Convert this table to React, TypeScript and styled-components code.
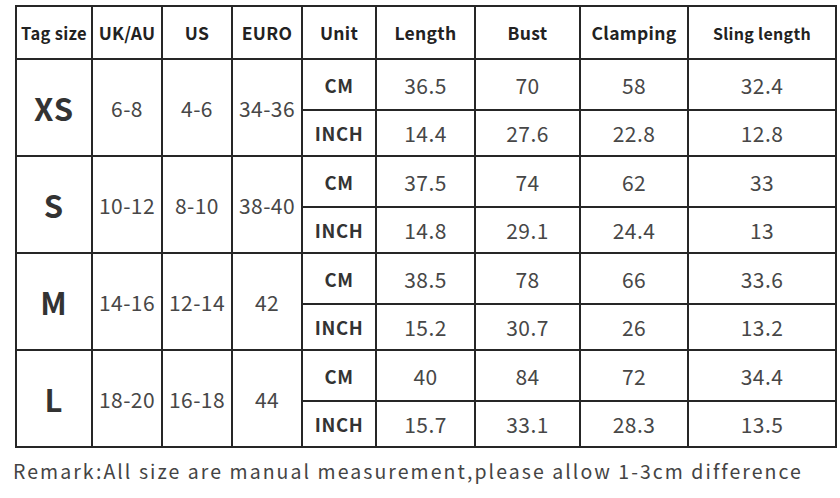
import { Fragment } from 'react';
import styled, { createGlobalStyle } from 'styled-components';

const GlobalStyle = createGlobalStyle`
  html, body {
    margin: 0;
    padding: 0;
    background: #ffffff;
  }
  body {
    font-family: "Noto Sans CJK SC", "Noto Sans", sans-serif;
  }
`;

type SizeRow = {
  tag: string;
  uk: string;
  us: string;
  euro: string;
  cm: string[];
  inch: string[];
};

const sizes: SizeRow[] = [
  { tag: 'XS', uk: '6-8', us: '4-6', euro: '34-36', cm: ['36.5', '70', '58', '32.4'], inch: ['14.4', '27.6', '22.8', '12.8'] },
  { tag: 'S', uk: '10-12', us: '8-10', euro: '38-40', cm: ['37.5', '74', '62', '33'], inch: ['14.8', '29.1', '24.4', '13'] },
  { tag: 'M', uk: '14-16', us: '12-14', euro: '42', cm: ['38.5', '78', '66', '33.6'], inch: ['15.2', '30.7', '26', '13.2'] },
  { tag: 'L', uk: '18-20', us: '16-18', euro: '44', cm: ['40', '84', '72', '34.4'], inch: ['15.7', '33.1', '28.3', '13.5'] },
];

// header label + font size (the reference shrinks the two longest labels)
const headers: [string, number][] = [
  ['Tag size', 16.5],
  ['UK/AU', 17.5],
  ['US', 17.5],
  ['EURO', 17.5],
  ['Unit', 17.5],
  ['Length', 17.5],
  ['Bust', 17.5],
  ['Clamping', 17.5],
  ['Sling length', 16],
];
const colWidths = [76, 70, 70, 70, 74, 99, 105, 108, 148];

const Page = styled.div`
  padding: 5px 0 0 15px;
`;

const Chart = styled.table`
  border-collapse: collapse;
  table-layout: fixed;
  width: 820px;
  border: 2px solid #262626;
`;

const Row = styled.tr<{ $h: number }>`
  height: ${(p) => p.$h}px;
`;

const HeadCell = styled.th<{ $size: number }>`
  padding: 0;
  border: 2px solid #262626;
  font-size: ${(p) => p.$size}px;
  font-weight: 700;
  color: #222;
  text-align: center;
  vertical-align: middle;
  white-space: nowrap;
  letter-spacing: 0.3px;
`;

const TagCell = styled.td`
  padding: 0;
  border: 2px solid #262626;
  font-size: 31px;
  font-weight: 700;
  color: #333;
  text-align: center;
  letter-spacing: 1px;
`;

const SpanCell = styled.td`
  padding: 0;
  border: 2px solid #262626;
  font-size: 21px;
  font-weight: 400;
  color: #474747;
  text-align: center;
  white-space: nowrap;
  letter-spacing: 0.4px;
`;

const UnitCell = styled.td`
  padding: 0;
  border: 2px solid #262626;
  font-size: 18.5px;
  font-weight: 700;
  color: #333;
  text-align: center;
  letter-spacing: 0.6px;
`;

const ValueCell = styled.td`
  padding: 0;
  border: 2px solid #262626;
  font-size: 21px;
  font-weight: 400;
  color: #474747;
  text-align: center;
  letter-spacing: 0.4px;
`;

const Remark = styled.p`
  margin: 8px 0 0 -2px;
  font-size: 19.5px;
  letter-spacing: 2.05px;
  color: #444;
  white-space: nowrap;
`;

export default function App() {
  return (
    <>
      <GlobalStyle />
      <Page>
        <Chart>
          <colgroup>
            {colWidths.map((w, i) => (
              <col key={i} style={{ width: w }} />
            ))}
          </colgroup>
          <thead>
            <Row $h={53}>
              {headers.map(([h, size]) => (
                <HeadCell key={h} $size={size}>
                  {h}
                </HeadCell>
              ))}
            </Row>
          </thead>
          <tbody>
            {sizes.map((s) => (
              <Fragment key={s.tag}>
                <Row $h={51}>
                  <TagCell rowSpan={2}>{s.tag}</TagCell>
                  <SpanCell rowSpan={2}>{s.uk}</SpanCell>
                  <SpanCell rowSpan={2}>{s.us}</SpanCell>
                  <SpanCell rowSpan={2}>{s.euro}</SpanCell>
                  <UnitCell>CM</UnitCell>
                  {s.cm.map((v, i) => (
                    <ValueCell key={i}>{v}</ValueCell>
                  ))}
                </Row>
                <Row $h={46}>
                  <UnitCell>INCH</UnitCell>
                  {s.inch.map((v, i) => (
                    <ValueCell key={i}>{v}</ValueCell>
                  ))}
                </Row>
              </Fragment>
            ))}
          </tbody>
        </Chart>
        <Remark>Remark:All size are manual measurement,please allow 1-3cm difference</Remark>
      </Page>
    </>
  );
}
